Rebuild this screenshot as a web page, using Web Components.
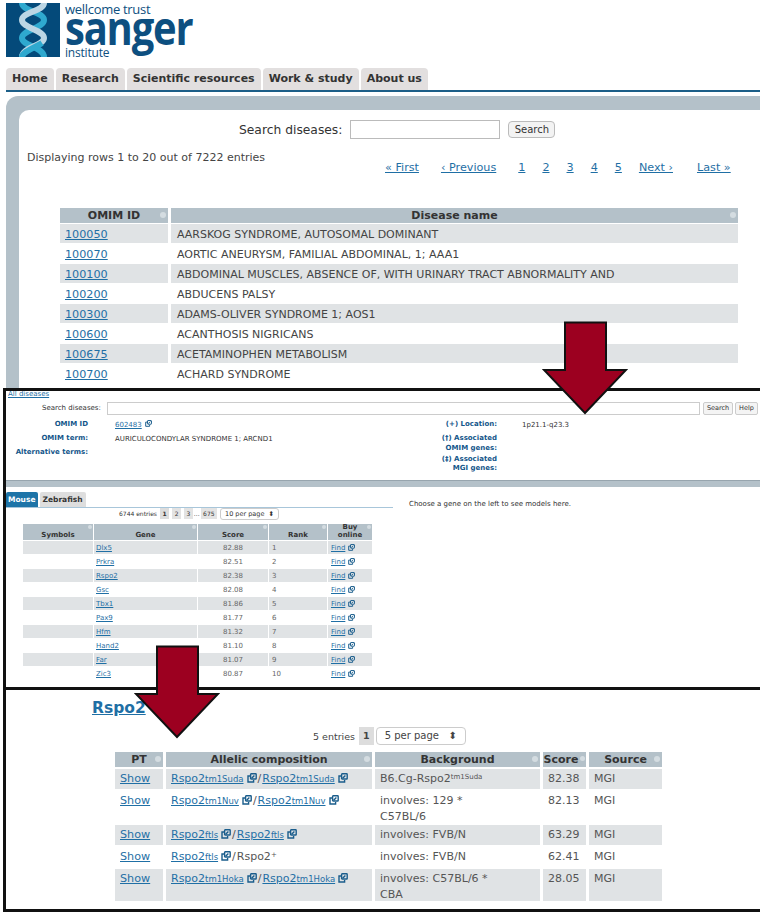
<!DOCTYPE html>
<html>
<head>
<meta charset="utf-8">
<style>
    html, body { margin: 0; padding: 0; background: #fff; }
    body { width: 760px; height: 914px; overflow: hidden; position: relative; font-family: "DejaVu Sans", sans-serif; color: #444; }
</style>
</head>
<body>
<sanger-page>
    <site-top></site-top>
    <disease-detail></disease-detail>
    <allele-panel></allele-panel>
</sanger-page>
<drop-arrow style="left:542px;top:321px"></drop-arrow>
<drop-arrow style="left:134px;top:645px"></drop-arrow>

<script>
const LINK = '#1f6fa5';

// small "opens elsewhere" glyph used after links
class ExtIcon extends HTMLElement {
    connectedCallback() {
        const root = this.attachShadow({ mode: 'open' });
        const size = this.getAttribute('size') || 10;
        root.innerHTML = `
            <style>
                :host { display: inline-block; vertical-align: top; margin: 1px 0 0 3px; line-height: 0; }
                svg { display: block; }
            </style>
            <svg width="${size}" height="${size}" viewBox="0 0 10 10" fill="none" stroke="#1a5d8c" stroke-width="1.4">
                <rect x="3.6" y="0.8" width="5.6" height="5.2" rx="0.6"/>
                <path d="M3 3H1v6h5.6V7"/>
                <path d="M4.6 5.2 7.4 2.4"/>
            </svg>`;
    }
}

class DropArrow extends HTMLElement {
    connectedCallback() {
        const root = this.attachShadow({ mode: 'open' });
        root.innerHTML = `
            <style>:host { display: block; position: absolute; width: 86px; height: 94px; line-height: 0; }</style>
            <svg width="86" height="94" viewBox="0 0 86 94">
                <path d="M23 1.5H64V49H84L43 92 2 49H23Z" fill="#9c0020" stroke="#111" stroke-width="2"/>
            </svg>`;
    }
}

class SangerPage extends HTMLElement {
    constructor() {
        super();
        this.attachShadow({ mode: 'open' }).innerHTML = `
            <style>:host { display: flex; flex-direction: column; width: 760px; }</style>
            <slot></slot>`;
    }
}

class SiteTop extends HTMLElement {
    connectedCallback() {
        this.attachShadow({ mode: 'open' });
        const names = ['AARSKOG SYNDROME, AUTOSOMAL DOMINANT', 'AORTIC ANEURYSM, FAMILIAL ABDOMINAL, 1; AAA1',
            'ABDOMINAL MUSCLES, ABSENCE OF, WITH URINARY TRACT ABNORMALITY AND', 'ABDUCENS PALSY',
            'ADAMS-OLIVER SYNDROME 1; AOS1', 'ACANTHOSIS NIGRICANS', 'ACETAMINOPHEN METABOLISM', 'ACHARD SYNDROME'];
        const ids = ['100050', '100070', '100100', '100200', '100300', '100600', '100675', '100700'];
        const rows = ids.map((id, i) => `<tr><td class="id"><a>${id}</a></td><td>${names[i]}</td></tr>`).join('');
        this.shadowRoot.innerHTML = `
            <style>
                :host { display: block; height: 388px; overflow: hidden; }
                a { color: ${LINK}; text-decoration: underline; }
                .masthead { display: flex; gap: 5px; padding: 3px 0 0 6px; height: 68px; box-sizing: border-box; }
                .word { display: flex; flex-direction: column; color: #0d4f80; font-family: "Open Sans", sans-serif; }
                .word .a { font-size: 13px; line-height: 13px; height: 13px; letter-spacing: -0.3px; }
                .word .b { font-size: 47px; line-height: 31px; height: 30px; margin: -4px 0 4px; font-weight: 700; letter-spacing: -1.4px; transform: scaleX(.85); transform-origin: left; }
                .word .c { font-size: 12px; line-height: 13px; height: 13px; letter-spacing: -0.2px; }
                nav { display: flex; gap: 2px; margin-left: 6px; border-bottom: 2px solid #1d5f88; height: 22px; }
                nav span { background: #e2dfdf; border-radius: 4px 4px 0 0; font-weight: 700; font-size: 11px; color: #333; line-height: 22px; padding: 0 6px; }
                .panel { margin: 4px 0 0 6px; padding: 14px 0 0 13px; background: #b4c1c9; border-top-left-radius: 12px; height: 290px; }
                .inner { background: #fff; border-top-left-radius: 10px; height: 100%; padding: 10px 0 0 8px; }
                .search { display: flex; align-items: center; margin-left: 212px; height: 19px; font-size: 12.3px; color: #333; }
                .search input { width: 146px; height: 15px; margin: 0 8px; border: 1px solid #bbb; padding: 1px; }
                .search button { width: 47px; height: 17px; font: 10px "DejaVu Sans", sans-serif; color: #333; background: #f3f3f3; border: 1px solid #bbb; border-radius: 4px; padding: 0; }
                .count { font-size: 11px; margin-top: 12px; line-height: 14px; }
                .pager { display: flex; font-size: 11.2px; margin: -4px 0 0 358px; line-height: 14px; }
                .pager a { margin-right: 22px; }
                .pager a.n { margin-right: 17px; }
                .pager a.next { margin-right: 24px; }
                table { border-collapse: separate; border-spacing: 3px 1px; margin: 32px 0 0 30px; width: 684px; table-layout: fixed; font-size: 11px; }
                th { background: #b4c1c9; font-size: 11px; color: #333; height: 15px; padding: 0; line-height: 15px; position: relative; }
                th::after { content: ""; position: absolute; right: 2px; top: 4px; width: 6px; height: 6px; border-radius: 50%; background: #d4dce1; }
                td { height: 17px; padding: 2px 0 0 6px; line-height: 17px; white-space: nowrap; }
                tr:nth-child(odd) td { background: #e0e3e5; }
                tbody tr:nth-child(even) td { background: #fff; }
                td.id { font-size: 11.2px; padding-left: 5px; }
            </style>
            <div class="masthead">
                <svg width="54" height="54" viewBox="0 0 54 54">
                    <rect width="54" height="54" fill="#044a7a"/>
                    <path d="M16 0C16 8 38 9 38 17S16 27 16 35 38 44 38 54" fill="none" stroke="#2fa9cf" stroke-width="6"/>
                    <path d="M38 0C38 8 16 9 16 17S38 27 38 35 16 44 16 54" fill="none" stroke="#bcd6e4" stroke-width="6"/>
                    <path d="M16 54C16 49 30 44 36 40" fill="none" stroke="#2fa9cf" stroke-width="6"/>
                </svg>
                <div class="word">
                    <span class="a">wellcome trust</span>
                    <span class="b">sanger</span>
                    <span class="c">institute</span>
                </div>
            </div>
            <nav><span>Home</span><span>Research</span><span>Scientific resources</span><span>Work &amp; study</span><span>About us</span></nav>
            <div class="panel"><div class="inner">
                <div class="search">Search diseases:<input><button>Search</button></div>
                <div class="count">Displaying rows 1 to 20 out of 7222 entries</div>
                <div class="pager"><a>« First</a><a>‹ Previous</a><a class="n">1</a><a class="n">2</a><a class="n">3</a><a class="n">4</a><a class="n">5</a><a class="next">Next ›</a><a>Last »</a></div>
                <table>
                    <colgroup><col style="width:108px"><col></colgroup>
                    <thead><tr><th>OMIM ID</th><th>Disease name</th></tr></thead>
                    <tbody>${rows}</tbody>
                </table>
            </div></div>`;
    }
}

class DiseaseDetail extends HTMLElement {
    connectedCallback() {
        this.attachShadow({ mode: 'open' });
        const genes = [['Dlx5', '82.88'], ['Prkra', '82.51'], ['Rspo2', '82.38'], ['Gsc', '82.08'], ['Tbx1', '81.86'],
            ['Pax9', '81.77'], ['Hfm', '81.32'], ['Hand2', '81.10'], ['Far', '81.07'], ['Zic3', '80.87']];
        const rows = genes.map((g, i) => `<tr><td></td><td><a>${g[0]}</a></td><td class="c">${g[1]}</td><td>${i + 1}</td><td><a>Find</a><ext-icon size="7"></ext-icon></td></tr>`).join('');
        this.shadowRoot.innerHTML = `
            <style>
                :host { display: block; height: 302px; box-sizing: border-box; margin-left: 3px; border: 3px solid #111; border-right: 0; overflow: hidden; font-size: 7px; color: #333; background: #fff; }
                a { color: ${LINK}; text-decoration: underline; }
                .all { padding-left: 2px; line-height: 10px; margin-top: -2px; }
                .search { display: flex; align-items: center; height: 14px; margin-top: 2px; }
                .search label { width: 95px; text-align: right; }
                .search input { width: 592px; height: 11px; margin: 0 3px 0 6px; border: 1px solid #ccc; padding: 0; }
                .search button { height: 13px; width: 30px; font: 6.5px "DejaVu Sans", sans-serif; background: #f4f4f4; border: 1px solid #ccc; border-radius: 2px; padding: 0; margin-right: 2px; color: #333; }
                .search button + button { width: 23px; }
                .info { display: flex; margin-top: 5px; height: 60px; }
                .facts { display: grid; grid-template-columns: 82px 232px; grid-auto-rows: 14px; column-gap: 27px; width: 341px; }
                .place { display: grid; grid-template-columns: 150px 1fr; column-gap: 25px; grid-template-rows: 14px 20.5px 20px; }
                b { color: #14568a; text-align: right; line-height: 9.5px; }
                .info div div { line-height: 10px; }
                .bar { height: 7px; background: #b4c1c9; border-top: 1px solid #97a5ae; box-sizing: border-box; }
                .lower { display: flex; }
                .genes { width: 387px; }
                .tabs { display: flex; gap: 2px; margin-top: 5px; border-bottom: 1px solid #a8c6da; height: 15px; }
                .tabs span { font-weight: 700; font-size: 7.5px; line-height: 15px; padding: 0 3px; background: #dedede; border-radius: 2px 2px 0 0; }
                .tabs span:first-child { background: #1d74a8; color: #fff; padding: 0 2px; }
                .pages { display: flex; align-items: center; gap: 3px; height: 13px; margin: -1px 0 0 113px; font-size: 6px; }
                .pages i { font-style: normal; background: #e3e3e3; padding: 0 2.5px; line-height: 11px; }
                .pages i.on { font-weight: 700; background: #ddd; }
                .pages .dots { margin: 0 -2px; }
                .pages .sel { border: 1px solid #ccc; border-radius: 3px; padding: 0 4px; line-height: 10px; font-size: 6.5px; }
                table { border-collapse: separate; border-spacing: 1px; margin: 3px 0 0 16px; width: 351px; table-layout: fixed; font-size: 7px; }
                th { background: #b4c1c9; font-size: 7px; height: 15px; padding: 0 0 1px; line-height: 7.5px; vertical-align: bottom; color: #333; position: relative; }
                th::after { content: ""; position: absolute; right: 1px; top: 1px; width: 4px; height: 4px; border-radius: 50%; background: #d4dce1; }
                td { height: 11px; padding: 2px 0 0 3px; line-height: 11px; white-space: nowrap; color: #666; }
                td:nth-child(2) { padding-left: 2px; }
                td.c { text-align: center; padding-left: 0; }
                tbody tr:nth-child(odd) td { background: #e0e3e5; }
                .note { margin: 13px 0 0 16px; font-size: 7px; }
            </style>
            <div class="all"><a>All diseases</a></div>
            <div class="search"><label>Search diseases:</label><input><button>Search</button><button>Help</button></div>
            <div class="info">
                <div class="facts">
                    <b>OMIM ID</b><div><a>602483</a><ext-icon size="7" style="margin-top:0"></ext-icon></div>
                    <b>OMIM term:</b><div>AURICULOCONDYLAR SYNDROME 1; ARCND1</div>
                    <b>Alternative terms:</b><div></div>
                </div>
                <div class="place">
                    <b>(+) Location:</b><div>1p21.1-q23.3</div>
                    <b>(†) Associated<br>OMIM genes:</b><div></div>
                    <b>(‡) Associated<br>MGI genes:</b><div></div>
                </div>
            </div>
            <div class="bar"></div>
            <div class="lower">
                <div class="genes">
                    <div class="tabs"><span>Mouse</span><span>Zebrafish</span></div>
                    <div class="pages">6744 entries <i class="on">1</i><i>2</i><i>3</i><span class="dots">...</span><i>675</i><span class="sel">10 per page &nbsp;⬍</span></div>
                    <table>
                        <colgroup><col style="width:70px"><col style="width:103px"><col style="width:70px"><col style="width:58px"><col></colgroup>
                        <thead><tr><th>Symbols</th><th>Gene</th><th>Score</th><th>Rank</th><th>Buy<br>online</th></tr></thead>
                        <tbody>${rows}</tbody>
                    </table>
                </div>
                <div class="note">Choose a gene on the left to see models here.</div>
            </div>`;
    }
}

class AllelePanel extends HTMLElement {
    connectedCallback() {
        this.attachShadow({ mode: 'open' });
        const al = (sub) => `<a>Rspo2<small>${sub}</small></a><ext-icon size="10"></ext-icon>`;
        const slash = '<span class="s">/</span>';
        const line2 = (t) => `<span class="l2">${t}</span>`;
        const data = [
            [al('tm1Suda') + slash + al('tm1Suda'), 'B6.Cg-Rspo2<sup>tm1Suda</sup>', '82.38'],
            [al('tm1Nuv') + slash + al('tm1Nuv'), 'involves: 129 *' + line2('C57BL/6'), '82.13'],
            [al('ftls') + slash + al('ftls'), 'involves: FVB/N', '63.29'],
            [al('ftls') + slash + 'Rspo2<sup>+</sup>', 'involves: FVB/N', '62.41'],
            [al('tm1Hoka') + slash + al('tm1Hoka'), 'involves: C57BL/6 *' + line2('CBA'), '28.05'],
        ];
        const rows = data.map(r => `<tr><td><a>Show</a></td><td>${r[0]}</td><td>${r[1]}</td><td>${r[2]}</td><td>MGI</td></tr>`).join('');
        this.shadowRoot.innerHTML = `
            <style>
                :host { display: block; height: 222px; box-sizing: border-box; margin-left: 3px; border: 3px solid #111; border-top: 0; border-right: 0; font-size: 11px; overflow: hidden; background: #fff; }
                a { color: ${LINK}; text-decoration: underline; }
                h2 { margin: 8px 0 0 86px; font-size: 15.5px; line-height: 20px; }
                small { font-size: 8.5px; }
                sup { font-size: 7px; line-height: 0; vertical-align: 3px; }
                .s { margin: 0 1px; }
                .l2 { display: block; margin: 1px 0 -1px; }
                .pages { display: flex; align-items: center; gap: 4px; height: 20px; margin: 8px 0 0 307px; font-size: 9.5px; }
                .pages i { font-style: normal; font-weight: 700; background: #ddd; padding: 0 4px; line-height: 18px; margin-right: -2px; }
                .pages span { border: 1px solid #ccc; border-radius: 4px; padding: 0 8px; line-height: 16px; font-size: 10px; }
                table { border-collapse: separate; border-spacing: 3px 2px; margin: 4px 0 0 106px; width: 553px; table-layout: fixed; }
                th { background: #b4c1c9; font-size: 11px; color: #333; height: 13px; line-height: 14px; padding: 1px 0 0; position: relative; }
                th::after { content: ""; position: absolute; right: 2px; top: 4px; width: 6px; height: 6px; border-radius: 50%; background: #d4dce1; }
                th:nth-child(4) { padding-right: 7px; }
                th:nth-child(4)::after { right: 1px; width: 5px; height: 5px; }
                td { padding: 3px 0 0 5px; line-height: 14.5px; vertical-align: top; white-space: nowrap; color: #555; background: #fff; height: 17px; }
                tbody tr:nth-child(odd) td { background: #e0e3e5; }
                td:first-child { font-size: 11.2px; }
            </style>
            <h2><a>Rspo2</a></h2>
            <div class="pages">5 entries <i>1</i><span>5 per page &nbsp; ⬍</span></div>
            <table>
                <colgroup><col style="width:48px"><col style="width:206px"><col style="width:165px"><col style="width:43px"><col></colgroup>
                <thead><tr><th>PT</th><th>Allelic composition</th><th>Background</th><th>Score</th><th>Source</th></tr></thead>
                <tbody>${rows}</tbody>
            </table>`;
    }
}

customElements.define('ext-icon', ExtIcon);
customElements.define('drop-arrow', DropArrow);
customElements.define('sanger-page', SangerPage);
customElements.define('site-top', SiteTop);
customElements.define('disease-detail', DiseaseDetail);
customElements.define('allele-panel', AllelePanel);
</script>
</body>
</html>
